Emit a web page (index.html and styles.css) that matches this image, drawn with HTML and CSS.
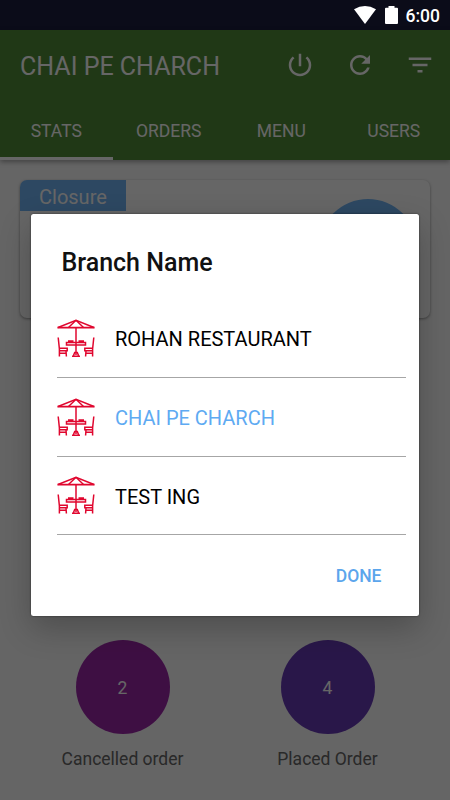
FILE: index.html
```html
<!DOCTYPE html>
<html lang="en">
<head>
  <meta charset="UTF-8" />
  <meta name="viewport" content="width=device-width, initial-scale=1.0"/>
  <title>Chai Pe Charch</title>
  <link rel="stylesheet" href="styles.css">
</head>
<body>
  <!-- shared icon for the branch rows -->
  <svg class="sprite" width="0" height="0">
    <symbol id="table" viewBox="0 0 38 38">
      <g fill="none" stroke="#e0072f" stroke-width="1.5">
        <path d="M1 8.5 19 1.2 37 8.5"/>
        <path d="M.4 8.6h37.2" stroke-width="1.8"/>
        <path d="M19 1.2 11.5 8.5M19 1.2 26.5 8.5"/>
        <path d="M19 8.5V36"/>
        <path d="M9.5 23.5h19v2.6h-19zM11 22h5.5M21.5 22H27"/>
        <path d="M16.5 36.5l1.2-3h2.6l1.2 3M15 37.2h8"/>
        <path d="M1.2 18.5 2.4 30v7.5M2.4 29.2h7.8v2.6H2.4M9 31.8l.4 5.7M2.4 34.3h6.8"/>
        <path d="M36.8 18.5 35.6 30v7.5M35.6 29.2h-7.8v2.6h7.8M29 31.8l-.4 5.7M35.6 34.3h-6.8"/>
      </g>
    </symbol>
  </svg>

  <div class="status-bar">
    <svg class="wifi" viewBox="0 0 22 18"><path d="M0 3.2Q11-3.2 22 3.2L11 18z"/></svg>
    <svg class="battery" viewBox="0 0 13 18"><path d="M3.5 0h6v1.8H12q1 0 1 1V17q0 1-1 1H1q-1 0-1-1V2.8q0-1 1-1h2.5z"/></svg>
    <span class="time">6:00</span>
  </div>

  <div class="screen">
    <header class="app-bar">
      <div class="toolbar">
        <h1>CHAI PE CHARCH</h1>
        <div class="actions">
          <svg viewBox="0 0 24 24"><path d="M13 3h-2v10h2V3zm4.83 2.17l-1.42 1.42C17.99 7.86 19 9.81 19 12c0 3.87-3.13 7-7 7s-7-3.13-7-7c0-2.19 1.01-4.14 2.58-5.42L6.17 5.17C4.23 6.82 3 9.26 3 12c0 4.97 4.03 9 9 9s9-4.03 9-9c0-2.74-1.23-5.18-3.17-6.83z"/></svg>
          <svg viewBox="0 0 24 24"><path d="M17.65 6.35C16.2 4.9 14.21 4 12 4c-4.42 0-7.99 3.58-7.99 8s3.57 8 7.99 8c3.73 0 6.84-2.55 7.73-6h-2.08c-.82 2.33-3.04 4-5.65 4-3.31 0-6-2.69-6-6s2.69-6 6-6c1.66 0 3.14.69 4.22 1.78L13 11h7V4l-2.35 2.35z"/></svg>
          <svg viewBox="0 0 24 24"><path d="M10 18h4v-2h-4v2zM3 6v2h18V6H3zm3 7h12v-2H6v2z"/></svg>
        </div>
      </div>
      <nav class="tabs">
        <div class="tab active">STATS</div>
        <div class="tab">ORDERS</div>
        <div class="tab">MENU</div>
        <div class="tab">USERS</div>
      </nav>
    </header>

    <main>
      <section class="card">
        <div class="card-label">Closure</div>
        <div class="card-circle"></div>
      </section>

      <section class="stats">
        <div class="stat">
          <div class="circle purple">2</div>
          <div class="stat-name">Cancelled order</div>
        </div>
        <div class="stat">
          <div class="circle indigo">4</div>
          <div class="stat-name">Placed Order</div>
        </div>
      </section>
    </main>

    <div class="overlay">
      <div class="dialog">
        <h2>Branch Name</h2>
        <ul class="branches">
          <li><svg><use href="#table"/></svg><span>ROHAN RESTAURANT</span></li>
          <li class="selected"><svg><use href="#table"/></svg><span>CHAI PE CHARCH</span></li>
          <li><svg><use href="#table"/></svg><span>TEST ING</span></li>
        </ul>
        <button class="done">DONE</button>
      </div>
    </div>
  </div>
</body>
</html>
```

FILE: styles.css
```css
* {
  box-sizing: border-box;
  padding: 0;
  margin: 0;
  font-family: Roboto, sans-serif;
}

body {
  width: 450px;
  height: 800px;
  overflow: hidden;
  background: #fcfcfc;
}

.sprite {
  position: absolute;
}

.status-bar {
  height: 30px;
  background: #0b0c19;
  color: #fff;
  display: flex;
  align-items: center;
  justify-content: flex-end;
  padding-right: 10px;
}

.status-bar svg {
  fill: #fff;
  height: 18px;
}

.wifi {
  width: 22px;
  margin-right: 9px;
}

.battery {
  width: 13px;
  margin-right: 8px;
}

.time {
  font-size: 17.5px;
  font-weight: 500;
  line-height: 30px;
  padding-top: 1px;
}

.screen {
  position: relative;
  height: 770px;
}

.app-bar {
  height: 130px;
  background: #508d37;
  color: #fff;
  box-shadow: 0 2px 5px rgba(0, 0, 0, 0.35);
}

.toolbar {
  height: 70px;
  display: flex;
  align-items: center;
  justify-content: space-between;
  padding: 0 15px 0 20px;
}

h1 {
  font-size: 25px;
  font-weight: 400;
  padding-top: 2px;
}

.actions {
  display: flex;
  gap: 30px;
}

.actions svg {
  width: 30px;
  height: 30px;
  fill: #fff;
}

.tabs {
  display: grid;
  grid-template-columns: repeat(4, 1fr);
  height: 60px;
}

.tab {
  font-size: 17.5px;
  line-height: 63px;
  height: 60px;
  text-align: center;
}

.tab.active {
  border-bottom: 3px solid #fff;
}

main {
  padding: 20px 20px 0;
}

.card {
  height: 138px;
  display: flex;
  justify-content: space-between;
  border-radius: 7px;
  background: #fff;
  box-shadow: 0 1px 3px rgba(0, 0, 0, 0.4);
  overflow: hidden;
}

.card-label {
  width: 106px;
  height: 31px;
  line-height: 34px;
  padding-left: 19px;
  font-size: 20px;
  color: #fff;
  background: #70b4f5;
}

.card-circle {
  width: 98px;
  height: 98px;
  margin: 19px 13px 0 0;
  border-radius: 50%;
  background: #70b4f5;
}

.stats {
  margin-top: 322px;
  display: grid;
  grid-template-columns: 1fr 1fr;
}

.stat {
  text-align: center;
}

.circle {
  width: 94px;
  height: 94px;
  margin: 0 auto;
  border-radius: 50%;
  color: #fff;
  font-size: 17.5px;
  line-height: 96px;
}

.purple {
  background: #9c27a8;
}

.indigo {
  background: #673ab7;
}

.stat-name {
  margin-top: 15px;
  font-size: 17.5px;
  line-height: 21px;
  color: #666;
}

/* dialog */
.overlay {
  position: absolute;
  inset: 0;
  background: rgba(0, 0, 0, 0.6);
  padding: 184px 0 0 31px;
}

.dialog {
  width: 387.5px;
  height: 401.5px;
  border-radius: 2.5px;
  background: #fff;
  box-shadow: 0 12px 32px rgba(0, 0, 0, 0.24), 0 0 2px rgba(0, 0, 0, 0.6);
  padding: 0 12.5px 0 26px;
}

h2 {
  font-size: 25px;
  font-weight: 500;
  line-height: 30px;
  padding: 34px 0 0 4.5px;
  height: 85px;
  color: #111;
}

.branches {
  list-style: none;
}

.branches li {
  height: 78.75px;
  display: flex;
  align-items: center;
  border-bottom: 1px solid #a6a6a6;
  font-size: 20px;
  color: #000;
}

.branches svg {
  width: 38px;
  height: 38px;
  margin-right: 20px;
}

.branches span {
  padding-top: 3px;
}

.branches .selected {
  color: #5eaaf2;
}

.done {
  display: block;
  margin: 30px 24.5px 0 auto;
  border: none;
  background: none;
  color: #5ba5ec;
  font-size: 17.5px;
  font-weight: 500;
  line-height: 22px;
  cursor: pointer;
}
```
